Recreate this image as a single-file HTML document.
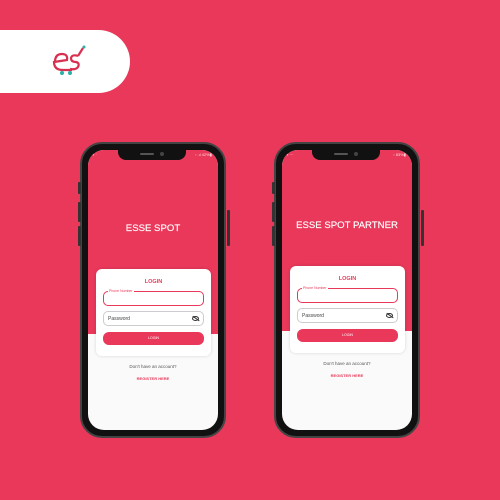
<!DOCTYPE html>
<html><head><style>
*{margin:0;padding:0;box-sizing:border-box}
body{width:500px;height:500px;background:#E9385A;position:relative;overflow:hidden;font-family:"Liberation Sans",sans-serif}
.pill{position:absolute;left:0;top:30px;width:130px;height:63px;background:#fff;border-radius:0 32px 32px 0}
.ph{position:absolute;top:142px;width:146px;height:296px;background:#111;border-radius:22px;border:2px solid #444}
.btn{position:absolute;background:#333;width:3px;border-radius:1px}
.scr{position:absolute;left:6px;top:6px;right:6px;bottom:6px;border-radius:16px;overflow:hidden;background:#fafafa}
.red{position:absolute;left:0;top:0;right:0;background:#E9385A}
.notch{position:absolute;left:30px;top:0;width:68px;height:10px;background:#111;border-radius:0 0 8px 8px}
.notch:before{content:"";position:absolute;left:22px;top:3px;width:14px;height:2px;background:#555;border-radius:1px}
.notch:after{content:"";position:absolute;left:42px;top:2px;width:4px;height:4px;background:#444;border-radius:50%}
.sb{position:absolute;top:2px;font-size:4px;color:#fdd}
.title{position:absolute;left:0;right:0;color:#fff;text-align:center;font-size:9.6px;-webkit-text-stroke:.15px #fff}
.card{position:absolute;left:8px;width:115px;height:87px;background:#fff;border-radius:6px;box-shadow:0 0 3px rgba(0,0,0,.15)}
.lg{position:absolute;left:0;right:0;top:10px;text-align:center;color:#E9385A;font-size:5.5px;font-weight:bold}
.f1{position:absolute;left:7px;right:7px;top:22px;height:15px;border:1px solid #E9385A;border-radius:5px}
.f1 span{position:absolute;left:4px;top:-3px;font-size:3.5px;color:#E9385A;background:#fff;padding:0 1px}
.f2{position:absolute;left:7px;right:7px;top:42px;height:15px;border:1px solid #ccc;border-radius:5px;font-size:5px;color:#444;padding:4px 0 0 4px}
.f2 i{position:absolute;right:4px;top:4px;width:7px;height:5px;border:1px solid #333;border-radius:50%}
.f2 i:after{content:"";position:absolute;left:-1px;top:1px;width:8px;height:1px;background:#333;transform:rotate(35deg)}
.b{position:absolute;left:7px;right:7px;top:63px;height:13px;background:#E9385A;border-radius:6px;color:#fff;font-size:3.5px;text-align:center;line-height:13px}
.t1{position:absolute;left:0;right:0;text-align:center;font-size:4.5px;color:#555}
.t2{position:absolute;left:0;right:0;text-align:center;font-size:4px;color:#E9385A;font-weight:bold}
</style></head><body>
<div class="pill"><svg style="position:absolute;left:50px;top:12px" width="42" height="40" viewBox="0 0 42 40">
<path d="M5 20 Q5 12 12 12 Q18 12 17 18 L4 20 Q4 28 13 28 L22 28" fill="none" stroke="#d8304f" stroke-width="2.2"/>
<path d="M28 14 Q22 12 21 16 Q21 20 26 20 Q30 21 28 25 Q26 28 20 27 M28 14 L33 6" fill="none" stroke="#d8304f" stroke-width="2.2"/>
<circle cx="34" cy="5" r="1.5" fill="#2bb0a8"/><circle cx="12" cy="31" r="2" fill="#2bb0a8"/><circle cx="20" cy="31" r="2" fill="#2bb0a8"/></svg></div>

<div class="ph" style="left:80px">
 <div class="btn" style="left:-4px;top:38px;height:12px"></div><div class="btn" style="left:-4px;top:58px;height:20px"></div><div class="btn" style="left:-4px;top:82px;height:20px"></div><div class="btn" style="left:145px;top:66px;height:36px"></div>
 <div class="scr"><div class="red" style="height:184px"></div><div class="notch"></div>
  <div class="sb" style="left:5px">▪ ·</div><div class="sb" style="right:6px">▫ .ıl 42%▮</div>
  <div class="title" style="top:73px">ESSE SPOT</div>
  <div class="card" style="top:119px"><div class="lg">LOGIN</div><div class="f1"><span>Phone Number</span></div><div class="f2">Password<i></i></div><div class="b">LOGIN</div></div>
  <div class="t1" style="top:214px">Don't have an account?</div>
  <div class="t2" style="top:226px">REGISTER HERE</div>
 </div></div>

<div class="ph" style="left:274px">
 <div class="btn" style="left:-4px;top:38px;height:12px"></div><div class="btn" style="left:-4px;top:58px;height:20px"></div><div class="btn" style="left:-4px;top:82px;height:20px"></div><div class="btn" style="left:145px;top:66px;height:36px"></div>
 <div class="scr"><div class="red" style="height:181px"></div><div class="notch"></div>
  <div class="sb" style="left:5px">▪ ···</div><div class="sb" style="right:6px">▫ 83%▮</div>
  <div class="title" style="top:70px">ESSE SPOT PARTNER</div>
  <div class="card" style="top:116px"><div class="lg">LOGIN</div><div class="f1"><span>Phone Number</span></div><div class="f2">Password<i></i></div><div class="b">LOGIN</div></div>
  <div class="t1" style="top:211px">Don't have an account?</div>
  <div class="t2" style="top:223px">REGISTER HERE</div>
 </div></div>
</body></html>
